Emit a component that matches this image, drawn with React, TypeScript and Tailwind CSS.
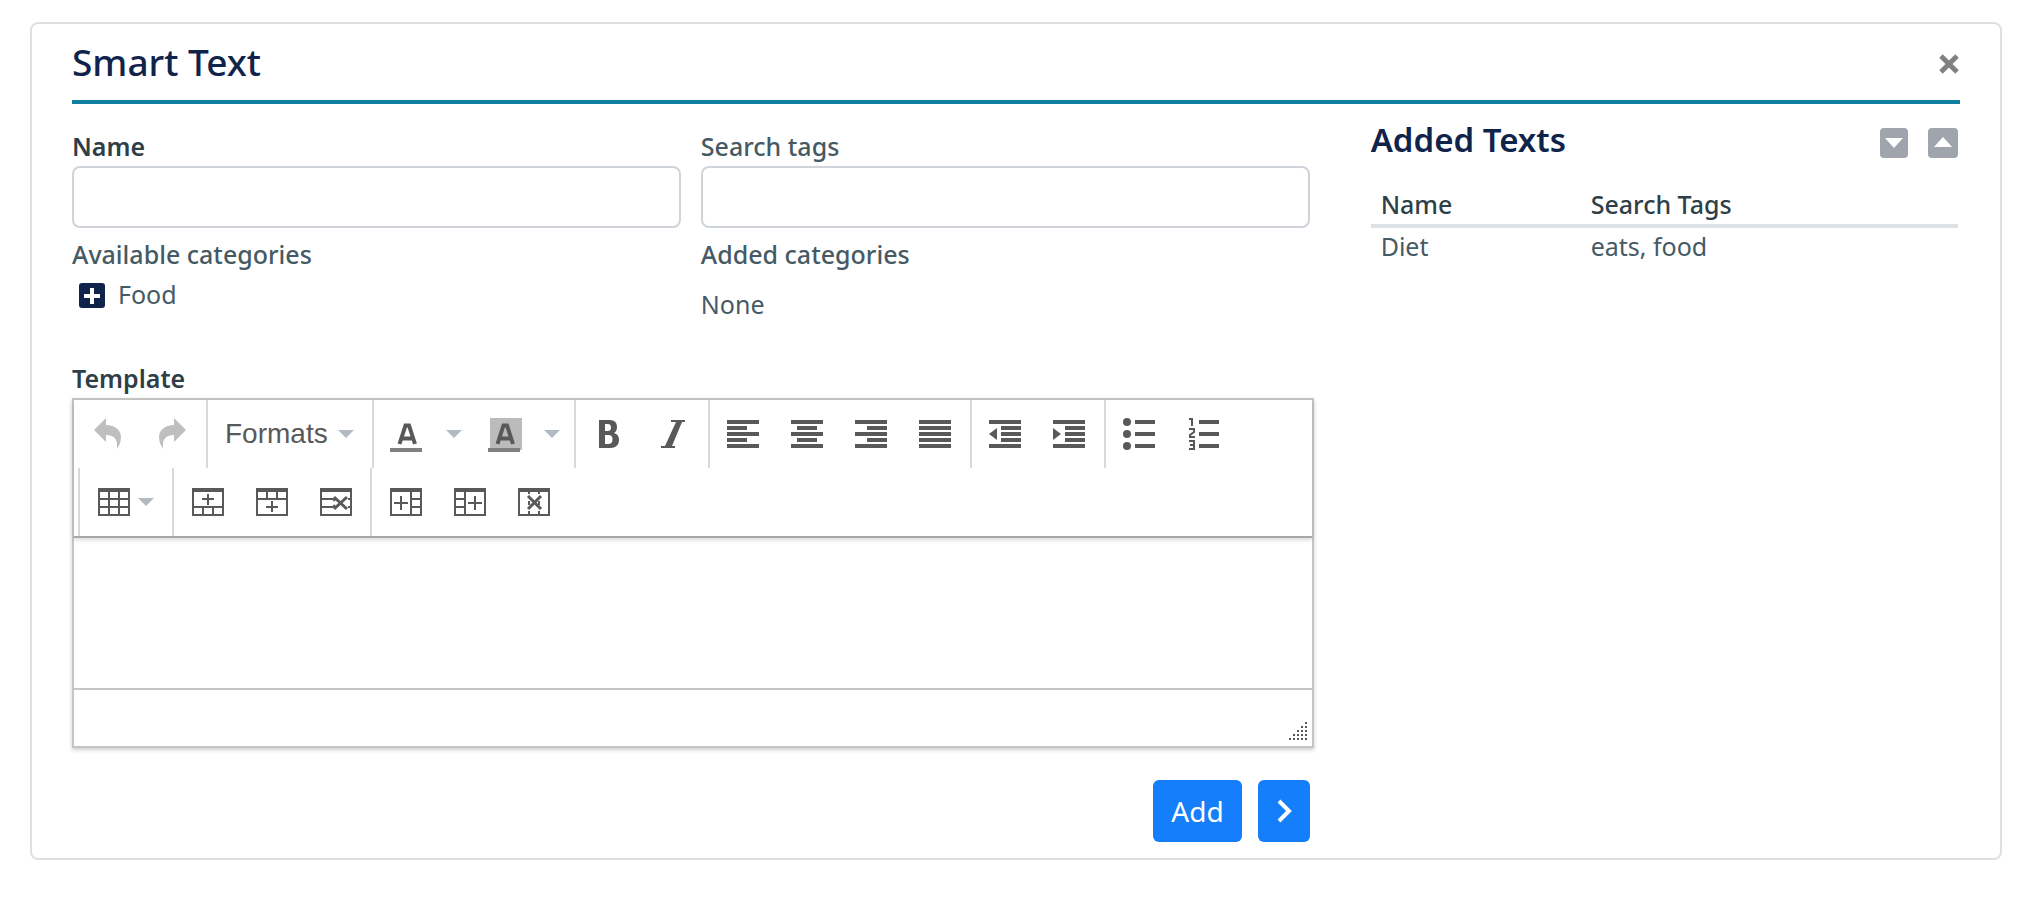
import { useId, type ReactNode } from 'react'

function Caret() {
  return (
    <svg width="16" height="8" viewBox="0 0 16 8" className="shrink-0">
      <path d="M0 0h16L8 8z" fill="#b3bac2" />
    </svg>
  )
}

function Icon({ children }: { children: ReactNode }) {
  return (
    <svg width="32" height="32" viewBox="0 0 32 32" fill="#595959" className="shrink-0 overflow-visible">
      {children}
    </svg>
  )
}

// [x, width] of the five lines of a paragraph icon
function Lines({ rows }: { rows: [number, number][] }) {
  return (
    <>
      {rows.map(([x, w], i) => (
        <rect key={i} x={x} y={2 + i * 6} width={w} height="4" />
      ))}
    </>
  )
}

const stroke = { fill: 'none', stroke: '#595959', strokeWidth: 2 }

function TableFrame({ children }: { children: ReactNode }) {
  return (
    <Icon>
      <path d="M0 2h32v28H0zM2 6v22h28V6z" fillRule="evenodd" />
      {children}
    </Icon>
  )
}

function ToolButton({ label, disabled, children }: { label: string; disabled?: boolean; children: ReactNode }) {
  return (
    <button type="button" aria-label={label} disabled={disabled} className="flex h-full w-16 items-center justify-center">
      {children}
    </button>
  )
}

function Group({ first, children }: { first?: boolean; children: ReactNode }) {
  return (
    <div role="group" className={`flex h-[68px] pl-px pr-[3px] ${first ? '' : 'border-l-2 border-[#d9d9d9]'}`}>
      {children}
    </div>
  )
}

function TableGroup({ children }: { children: ReactNode }) {
  return <div role="group" className="flex h-[68px] border-l-2 border-[#d9d9d9] px-0.5">{children}</div>
}

function ColorButton({ label, children }: { label: string; children: ReactNode }) {
  return (
    <button type="button" aria-label={label} className="flex h-full items-center gap-6 pl-[15px] pr-[11px]">
      <Icon>
        {children}
        <path d="M9.500 26 15.500 7.500h3.500L25 26M12 20.500h10.500" fill="none" stroke="#595959" strokeWidth="4" />
        <path d="M0 30h32v4H0z" fill="#808080" />
      </Icon>
      <Caret />
    </button>
  )
}

function Toolbar() {
  return (
    <div className="relative border-b-2 border-[#a8a8a8] shadow-[0_2px_4px_rgba(0,0,0,0.15)]">
      <div className="flex flex-wrap">
        <Group first>
          <ToolButton label="Undo" disabled>
            <Icon>
              <path d="M3 12 15 0v7c9 0 15 5 15 12 0 5-2 9-4 12 1-9-2-14-11-14v7z" fill="#bfbfbf" />
            </Icon>
          </ToolButton>
          <ToolButton label="Redo" disabled>
            <Icon>
              <path d="M31 12 19 0v7C10 7 4 12 4 19c0 5 2 9 4 12-1-9 2-14 11-14v7z" fill="#bfbfbf" />
            </Icon>
          </ToolButton>
        </Group>
        <Group>
          <button type="button" className="flex h-full w-40 items-center justify-between pl-4 pr-[15px] font-['Liberation_Sans',sans-serif] text-[28px] text-[#595959]">
            Formats
            <Caret />
          </button>
        </Group>
        <Group>
          <ColorButton label="Text color">{null}</ColorButton>
          <ColorButton label="Background color">
            <path d="M2 0h32v32H2z" fill="#bbb" />
          </ColorButton>
        </Group>
        <Group>
          <ToolButton label="Bold">
            <Icon>
              <path
                d="M6 2h10c5.500 0 8 2.500 8 7 0 3-1 5-3 6 3.500 1 5 3.200 5 6.500 0 5.500-3 8.500-9 8.500H6zM12 6v7h2.500c2.500 0 3.500-1 3.500-3.500S17 6 14.500 6zm0 11v9h3c3 0 4.500-1.500 4.500-4.500S18.500 17 15.500 17z"
                fillRule="evenodd"
              />
            </Icon>
          </ToolButton>
          <ToolButton label="Italic">
            <Icon>
              <path d="M14 2h14v2h-3L15 28h3v2H4v-2h4L19 4h-5z" />
            </Icon>
          </ToolButton>
        </Group>
        <Group>
          <ToolButton label="Align left">
            <Icon><Lines rows={[[0, 32], [0, 20], [0, 32], [0, 20], [0, 32]]} /></Icon>
          </ToolButton>
          <ToolButton label="Align center">
            <Icon><Lines rows={[[0, 32], [6, 20], [0, 32], [6, 20], [0, 32]]} /></Icon>
          </ToolButton>
          <ToolButton label="Align right">
            <Icon><Lines rows={[[0, 32], [12, 20], [0, 32], [12, 20], [0, 32]]} /></Icon>
          </ToolButton>
          <ToolButton label="Justify">
            <Icon><Lines rows={[[0, 32], [0, 32], [0, 32], [0, 32], [0, 32]]} /></Icon>
          </ToolButton>
        </Group>
        <Group>
          <ToolButton label="Decrease indent">
            <Icon>
              <Lines rows={[[0, 32], [12, 20], [12, 20], [12, 20], [0, 32]]} />
              <path d="M8 10v12L0 16z" />
            </Icon>
          </ToolButton>
          <ToolButton label="Increase indent">
            <Icon>
              <Lines rows={[[0, 32], [12, 20], [12, 20], [12, 20], [0, 32]]} />
              <path d="M0 10v12l8-6z" />
            </Icon>
          </ToolButton>
        </Group>
        <Group>
          <ToolButton label="Bullet list">
            <Icon>
              <path d="M12 2h20v4H12zM12 14h20v4H12zM12 26h20v4H12z" />
              <circle cx="4" cy="4" r="4" />
              <circle cx="4" cy="16" r="4" />
              <circle cx="4" cy="28" r="4" />
            </Icon>
          </ToolButton>
          <ToolButton label="Numbered list">
            <Icon>
              <path d="M12 2h20v4H12zM12 14h20v4H12zM12 26h20v4H12z" />
              <path d="M2 1h3v7M2 11h5v3L3 17v2h5M2 23h5v8H2M3 27h4" {...stroke} />
            </Icon>
          </ToolButton>
        </Group>
      </div>
      <div className="flex flex-wrap pl-1">
        <TableGroup>
          <button type="button" aria-label="Table" className="flex h-full items-center gap-2 px-4">
            <TableFrame>
              <path d="M11 6v23M21 6v23M1 13h30M1 21h30" {...stroke} />
            </TableFrame>
            <Caret />
          </button>
        </TableGroup>
        <TableGroup>
          <ToolButton label="Insert row before">
            <TableFrame>
              <path d="M1 21h30M11 21v8M21 21v8M16 8v11M10 13h12" {...stroke} />
            </TableFrame>
          </ToolButton>
          <ToolButton label="Insert row after">
            <TableFrame>
              <path d="M1 13h30M11 5v8M21 5v8M16 15v11M10 21h12" {...stroke} />
            </TableFrame>
          </ToolButton>
          <ToolButton label="Delete row">
            <TableFrame>
              <path d="M1 13h12l2 2M1 21h12l2-2M28 13h3M28 21h3" {...stroke} />
              <path d="m14 11 13 12M27 11 14 23" fill="none" stroke="#595959" strokeWidth="3" />
            </TableFrame>
          </ToolButton>
        </TableGroup>
        <TableGroup>
          <ToolButton label="Insert column before">
            <TableFrame>
              <path d="M21 5v24M21 13h10M21 21h10M11 10v14M4 17h14" {...stroke} />
            </TableFrame>
          </ToolButton>
          <ToolButton label="Insert column after">
            <TableFrame>
              <path d="M11 5v24M1 13h10M1 21h10M21 10v14M14 17h14" {...stroke} />
            </TableFrame>
          </ToolButton>
          <ToolButton label="Delete column">
            <TableFrame>
              <path d="M11 5v3M21 5v3M11 25v4M21 25v4M11 15v4M21 15v4" {...stroke} />
              <path d="m10 10 13 13M23 10 10 23" fill="none" stroke="#595959" strokeWidth="3" />
            </TableFrame>
          </ToolButton>
        </TableGroup>
      </div>
    </div>
  )
}

function Editor({ labelledBy }: { labelledBy: string }) {
  return (
    <div className="border-2 border-[#c5c5c5] shadow-[0_2px_4px_rgba(0,0,0,0.2)]">
      <Toolbar />
      <textarea aria-labelledby={labelledBy} className="block h-[150px] w-full resize-none p-4 outline-none" />
      <div className="flex h-[58px] items-end justify-end border-t-2 border-[#c5c5c5] p-1">
        <svg width="20" height="20" viewBox="0 0 20 20" fill="#595959">
          {[0, 1, 2, 3, 4].map((row) =>
            Array.from({ length: row + 1 }, (_, i) => (
              <rect key={`${row}-${i}`} x={17 - i * 4} y={row * 4} width="2" height="2" />
            ))
          )}
        </svg>
      </div>
    </div>
  )
}

function TextField({ label, required }: { label: string; required?: boolean }) {
  const id = useId()
  return (
    <div>
      <label htmlFor={id} className={`block leading-10 ${required ? 'font-semibold text-[#2e3f48]' : 'font-medium'}`}>
        {label}
      </label>
      <input id={id} type="text" className="block h-[62px] w-full rounded-lg border-2 border-[#ced4da] px-4 outline-none" />
    </div>
  )
}

const addedTexts = [{ name: 'Diet', tags: 'eats, food' }]

export default function App() {
  return (
    <div className="bg-white pt-[22px] pr-6 pb-11 pl-[30px] font-['Noto_Sans',sans-serif] text-[25px] text-[#455a64]">
      <div className="rounded-lg border-2 border-[#dfdfdf] px-10 pb-4">
        <header className="flex h-20 items-center justify-between border-b-4 border-[#1180a0]">
          <h1 className="text-[37px] font-medium text-[#10234b]">Smart Text</h1>
          <button type="button" aria-label="Close" className="pt-1">
            <svg width="22" height="22" viewBox="0 0 22 22" stroke="#808080" strokeWidth="5">
              <path d="m3 3 16 16M19 3 3 19" />
            </svg>
          </button>
        </header>

        <div className="flex">
          <form className="w-2/3 pt-[22px] pr-[17px]" onSubmit={(e) => e.preventDefault()}>
            <div className="grid grid-cols-2 gap-x-5 pr-1">
              <TextField label="Name" required />
              <TextField label="Search tags" />
              <div className="pt-1.5">
                <h3 className="font-medium leading-10">Available categories</h3>
                <div className="flex items-center gap-3 pl-1.5 leading-10">
                  <button type="button" aria-label="Add Food">
                    <svg width="28" height="28" viewBox="0 0 28 28">
                      <rect x="1" y="3" width="26" height="25" rx="3" fill="#10234b" />
                      <path d="M14 8v16M6 16h16" stroke="#fff" strokeWidth="4" />
                    </svg>
                  </button>
                  Food
                </div>
              </div>
              <div className="pt-1.5">
                <h3 className="font-medium leading-10">Added categories</h3>
                <p className="mt-2.5 leading-10">None</p>
              </div>
            </div>

            <div className="pt-[34px]">
              <h3 id="template" className="font-semibold leading-10 text-[#2e3f48]">Template</h3>
              <Editor labelledBy="template" />
            </div>

            <div className="flex justify-end gap-4 pt-8 pr-1">
              <button type="submit" className="h-[62px] rounded-md bg-[#157efb] px-[18px] text-[28px] text-white">Add</button>
              <button type="button" aria-label="Next" className="flex h-[62px] w-[52px] items-center justify-center rounded-md bg-[#157efb]">
                <svg width="16" height="26" viewBox="0 0 16 26" fill="none" stroke="#fff" strokeWidth="4">
                  <path d="m3 3 10 10L3 23" />
                </svg>
              </button>
            </div>
          </form>

          <section className="w-1/3 pt-4 pr-0.5 pl-10">
            <div className="flex items-center justify-between">
              <h2 className="text-[33px] leading-10 font-semibold text-[#10234b]">Added Texts</h2>
              <div className="flex gap-5 pt-1.5">
                <button type="button" aria-label="Move down" className="flex h-[30px] w-7 items-center justify-center rounded bg-[#a0a5ad]">
                  <svg width="18" height="10" viewBox="0 0 18 10"><path d="M0 0h18L9 10z" fill="#fff" /></svg>
                </button>
                <button type="button" aria-label="Move up" className="flex h-[30px] w-[30px] items-center justify-center rounded bg-[#a0a5ad] pb-0.5">
                  <svg width="18" height="10" viewBox="0 0 18 10"><path d="M0 10h18L9 0z" fill="#fff" /></svg>
                </button>
              </div>
            </div>
            <table className="mt-5 w-full table-fixed text-left">
              <thead className="border-b-4 border-[#dee1e6] leading-10 text-[#2e3f48]">
                <tr>
                  <th className="w-[210px] pt-1 pl-2.5 font-medium">Name</th>
                  <th className="pt-1 pl-2.5 font-medium">Search Tags</th>
                </tr>
              </thead>
              <tbody className="leading-9">
                {addedTexts.map((text) => (
                  <tr key={text.name}>
                    <td className="pl-2.5">{text.name}</td>
                    <td className="pl-2.5">{text.tags}</td>
                  </tr>
                ))}
              </tbody>
            </table>
          </section>
        </div>
      </div>
    </div>
  )
}
